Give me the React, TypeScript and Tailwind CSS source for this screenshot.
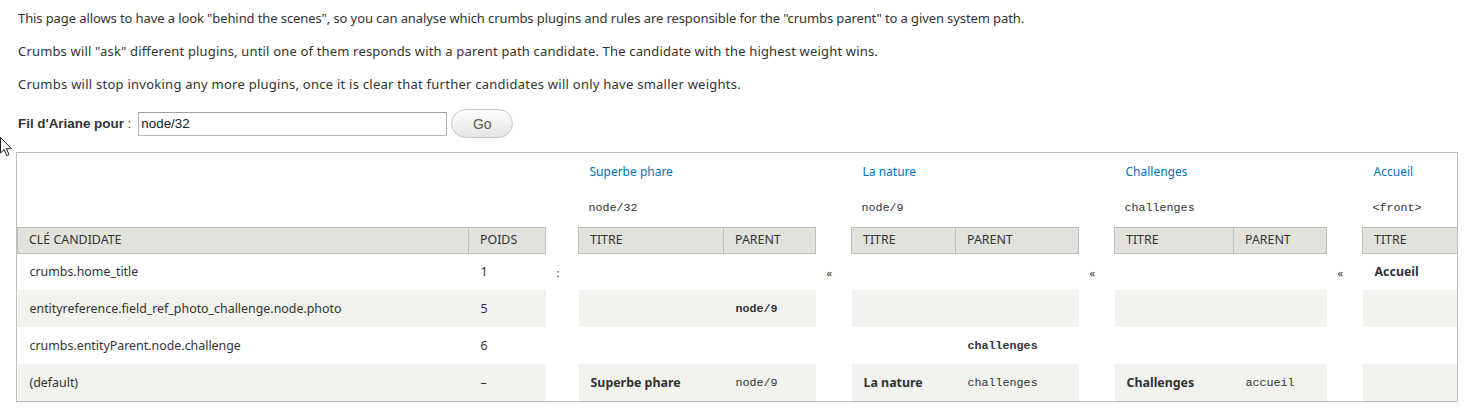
import React from "react";

type Cell = { text: string; mono?: boolean; bold?: boolean } | null;

interface Row {
  key: string;
  weight: string;
  seps: string[];
  groups: Cell[][];
}

// last group only shows its TITRE column, the rest is clipped by the box
const COLS = [451, 77, 33, 145, 92, 36, 104, 123, 36, 119, 93, 36, 200];

const GROUPS = [
  { title: "Superbe phare", path: "node/32" },
  { title: "La nature", path: "node/9" },
  { title: "Challenges", path: "challenges" },
  { title: "Accueil", path: "<front>" },
];

const ROWS: Row[] = [
  {
    key: "crumbs.home_title",
    weight: "1",
    seps: [":", "«", "«", "«"],
    groups: [[null, null], [null, null], [null, null], [{ text: "Accueil", bold: true }]],
  },
  {
    key: "entityreference.field_ref_photo_challenge.node.photo",
    weight: "5",
    seps: ["", "", "", ""],
    groups: [[null, { text: "node/9", mono: true, bold: true }], [null, null], [null, null], [null]],
  },
  {
    key: "crumbs.entityParent.node.challenge",
    weight: "6",
    seps: ["", "", "", ""],
    groups: [[null, null], [null, { text: "challenges", mono: true, bold: true }], [null, null], [null]],
  },
  {
    key: "(default)",
    weight: "–",
    seps: ["", "", "", ""],
    groups: [
      [{ text: "Superbe phare", bold: true }, { text: "node/9", mono: true }],
      [{ text: "La nature", bold: true }, { text: "challenges", mono: true }],
      [{ text: "Challenges", bold: true }, { text: "accueil", mono: true }],
      [null],
    ],
  },
];

function CellContent({ cell }: { cell: Cell }) {
  if (!cell) return null;
  return (
    <span
      className={`${cell.mono ? "font-['Liberation_Mono',monospace] text-[11.7px]" : ""} ${
        cell.bold ? "font-bold" : ""
      }`}
    >
      {cell.text}
    </span>
  );
}

function Cursor() {
  return (
    <svg className="absolute left-0 top-[137px]" width="13" height="20" viewBox="0 0 13 20">
      <path
        d="M0.5 0.5 L0.5 16 L4.2 12.5 L6.8 18.6 L9 17.6 L6.5 11.7 L11.5 11.7 Z"
        fill="#fff"
        stroke="#222"
        strokeWidth="1"
        strokeLinejoin="round"
      />
    </svg>
  );
}

export default function App() {
  const tableWidth = COLS.reduce((a, b) => a + b, 0);
  const th = "h-[26px] border border-[#bebfb9] bg-[#e1e2dc] pl-[11px] text-left font-normal uppercase";
  const td = "h-[37px] pl-[12px]";

  return (
    <div className="relative min-h-screen bg-white text-[13px] leading-[20px] text-[#333] font-['Noto_Sans',sans-serif]">
      <Cursor />
      <div className="pl-[16px] pr-[19px] pt-[8px]">
        <div className="pl-[2px]">
          <p className="mb-[13px] tracking-[-0.1px]">
            This page allows to have a look "behind the scenes", so you can analyse which crumbs plugins and
            rules are responsible for the "crumbs parent" to a given system path.
          </p>
          <p className="mb-[13px] tracking-[0.17px]">
            Crumbs will "ask" different plugins, until one of them responds with a parent path candidate. The
            candidate with the highest weight wins.
          </p>
          <p className="tracking-[0.25px]">
            Crumbs will stop invoking any more plugins, once it is clear that further candidates will only have
            smaller weights.
          </p>

          <form
            className="mt-[15px] flex h-[29px] items-center font-['Liberation_Sans',Arial,sans-serif]"
            onSubmit={(e) => e.preventDefault()}
          >
            <label className="text-[13.4px] text-[#333]">
              <span className="font-bold">Fil d'Ariane pour</span> :
            </label>
            <input
              className="ml-[7px] h-[24px] w-[309px] border border-[#b8b8b8] border-t-[#a0a0a0] bg-white px-[2px] text-[13.4px] text-[#222] outline-none"
              defaultValue="node/32"
            />
            <button
              type="submit"
              className="ml-[4px] h-[29px] w-[62px] rounded-full border border-[#c8c8c8] bg-gradient-to-b from-[#fdfdfd] to-[#e4e4e4] text-[14px] text-[#5a5a5a]"
            >
              Go
            </button>
          </form>
        </div>

        <div className="mt-[14px] overflow-hidden border border-[#bebfb9]">
          <table className="table-fixed border-collapse" style={{ width: tableWidth }}>
            <colgroup>
              {COLS.map((w, i) => (
                <col key={i} style={{ width: w }} />
              ))}
            </colgroup>
            <tbody>
              <tr>
                <td colSpan={3} className="h-[37px]" />
                {GROUPS.map((g, i) => (
                  <React.Fragment key={g.title}>
                    <td colSpan={i < GROUPS.length - 1 ? 2 : 1} className="h-[37px] pl-[11px] text-[12px]">
                      <a href="#" className="text-[#0074bd]">
                        {g.title}
                      </a>
                    </td>
                    {i < GROUPS.length - 1 && <td />}
                  </React.Fragment>
                ))}
              </tr>
              <tr>
                <td colSpan={3} className="h-[37px]" />
                {GROUPS.map((g, i) => (
                  <React.Fragment key={g.path}>
                    <td
                      colSpan={i < GROUPS.length - 1 ? 2 : 1}
                      className="h-[37px] pl-[10px] font-['Liberation_Mono',monospace] text-[11.7px]"
                    >
                      {g.path}
                    </td>
                    {i < GROUPS.length - 1 && <td />}
                  </React.Fragment>
                ))}
              </tr>
              <tr className="text-[12.4px]">
                <th className={th}>Clé candidate</th>
                <th className={th}>Poids</th>
                <td />
                {GROUPS.map((g, i) => (
                  <React.Fragment key={g.title}>
                    <th className={th}>Titre</th>
                    {i < GROUPS.length - 1 && <th className={th}>Parent</th>}
                    {i < GROUPS.length - 1 && <td />}
                  </React.Fragment>
                ))}
              </tr>
              {ROWS.map((row, r) => {
                const bg = r % 2 === 1 ? "bg-[#f2f2ee]" : "bg-white";
                return (
                  <tr key={row.key} className="text-[12.4px]">
                    <td className={`${td} ${bg}`}>{row.key}</td>
                    <td className={`${td} ${bg}`}>{row.weight}</td>
                    {row.groups.map((cells, g) => (
                      <React.Fragment key={g}>
                        <td className="h-[37px] pl-[11px] pt-[3px] text-[11px] text-[#333]">{row.seps[g]}</td>
                        {cells.map((c, k) => (
                          <td key={k} className={`${td} ${bg}`}>
                            <CellContent cell={c} />
                          </td>
                        ))}
                      </React.Fragment>
                    ))}
                  </tr>
                );
              })}
            </tbody>
          </table>
        </div>
      </div>
    </div>
  );
}
